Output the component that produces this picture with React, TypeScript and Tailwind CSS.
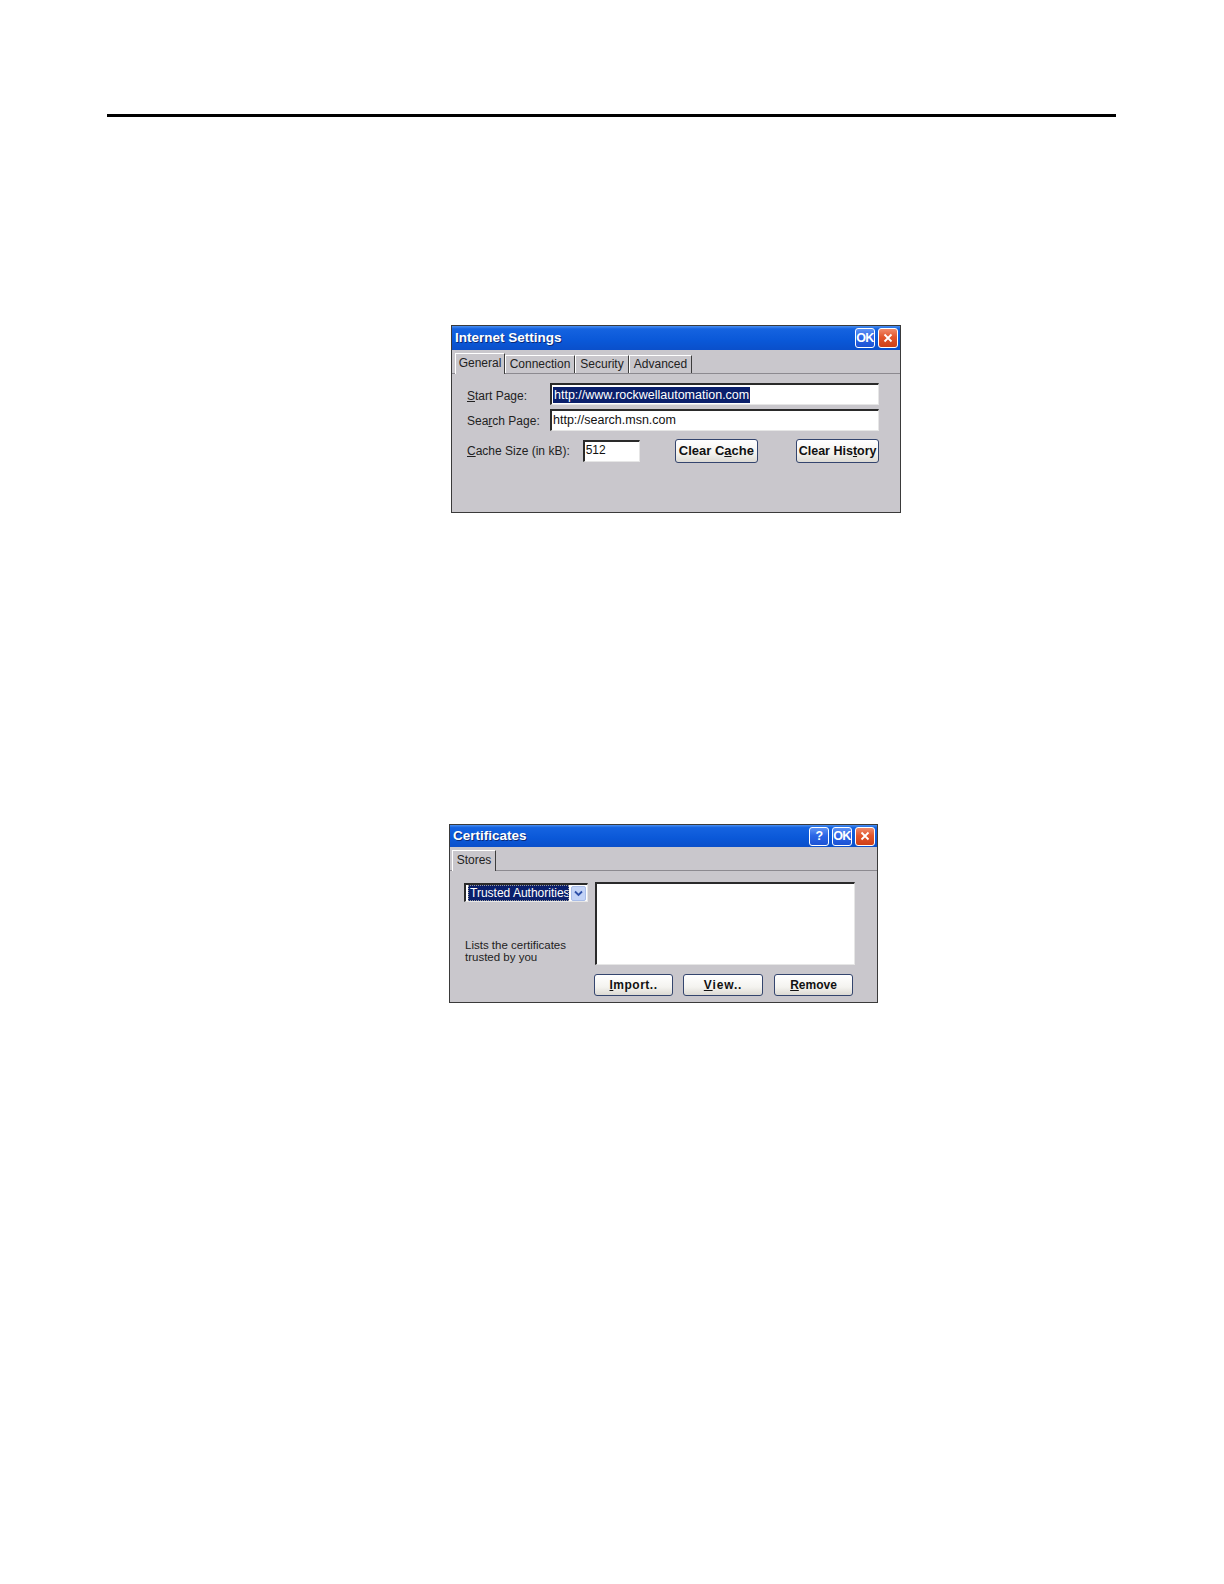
import React from "react";

function TitleBtn({ kind, h }: { kind: "ok" | "x" | "help"; h: string }) {
  if (kind === "x") {
    return (
      <div className={`w-[20px] ${h} rounded-[3px] border border-white bg-[linear-gradient(to_bottom,#f08a6a_0%,#e2562c_45%,#cf4017_100%)] flex items-center justify-center`}>
        <svg width="10" height="10" viewBox="0 0 10 10">
          <path d="M1.5 1.5 L8.5 8.5 M8.5 1.5 L1.5 8.5" stroke="white" strokeWidth="1.8" />
        </svg>
      </div>
    );
  }
  return (
    <div className={`w-[20px] ${h} rounded-[3px] border border-white bg-[linear-gradient(to_bottom,#5f93f5_0%,#2c66e6_45%,#1d53d4_100%)] flex items-center justify-center`}>
      <span className="text-white font-bold text-[12.5px] leading-none tracking-[-0.5px]">{kind === "ok" ? "OK" : "?"}</span>
    </div>
  );
}

function TitleBar({ title, help, h, bh }: { title: string; help?: boolean; h: string; bh: string }) {
  return (
    <div
      className={`${h} flex items-center justify-between pl-[3px] pr-[2px] bg-[linear-gradient(to_bottom,#4a8ff2_0%,#1563e0_12%,#0a58d8_60%,#0a4fca_100%)]`}
    >
      <span className="text-white font-bold text-[13.5px] leading-none [text-shadow:1px_1px_0_#0a2a78]">{title}</span>
      <div className="flex gap-[3px]">
        {help && <TitleBtn kind="help" h={bh} />}
        <TitleBtn kind="ok" h={bh} />
        <TitleBtn kind="x" h={bh} />
      </div>
    </div>
  );
}

function Tab({ label, w, selected }: { label: string; w: string; selected?: boolean }) {
  return (
    <div
      className={`${w} ${
        selected ? "h-[21px] -mb-px pt-[2px]" : "h-[18px] pt-[1px]"
      } border-l border-t border-l-white border-t-white border-r border-r-[#3c3c3c] bg-[#c9c7cc] text-[12px] text-[#222] text-center leading-[15px]`}
    >
      {label}
    </div>
  );
}

function Sunken({ className, children }: { className?: string; children?: React.ReactNode }) {
  return (
    <div
      className={`bg-white border-t-2 border-l-2 border-t-[#2a2a2a] border-l-[#2a2a2a] border-b border-r border-b-[#e6e6e6] border-r-[#e6e6e6] ${className ?? ""}`}
    >
      {children}
    </div>
  );
}

function XpButton({ className, children }: { className?: string; children: React.ReactNode }) {
  return (
    <div
      className={`rounded-[3px] border border-[#34456e] bg-[linear-gradient(to_bottom,#ffffff_0%,#f4f3ef_60%,#dcdad4_100%)] flex items-center justify-center font-bold text-[#111] whitespace-nowrap ${className ?? ""}`}
    >
      {children}
    </div>
  );
}

export default function App() {
  return (
    <div className="w-full h-screen bg-white font-['Liberation_Sans',Arial,sans-serif] overflow-hidden">
      <div className="pt-[114px] pl-[107px]">
        <div className="w-[1009px] h-[3px] bg-black" />
      </div>

      {/* Internet Settings dialog */}
      <div className="ml-[451px] mt-[208px] w-[450px] h-[188px] border border-[#3a3a3a] bg-[#c9c7cc] flex flex-col">
        <TitleBar title="Internet Settings" h="h-[24px]" bh="h-[20px]" />
        <div className="h-[24px] flex items-end pl-[3px] border-b border-b-[#8c8a90]">
          <Tab label="General" w="w-[50px]" selected />
          <Tab label="Connection" w="w-[70px]" />
          <Tab label="Security" w="w-[54px]" />
          <Tab label="Advanced" w="w-[63px]" />
        </div>
        <div className="flex-1 pt-[9px] pl-[15px] pr-[21px] text-[12px] text-[#222]">
          <div className="flex items-center">
            <div className="w-[83px] pt-[4px]">
              <span className="underline underline-offset-1">S</span>tart Page:
            </div>
            <Sunken className="flex-1 h-[22px] pl-[1px] flex items-center">
              <span className="bg-[#0a1f6b] text-white px-[1px] leading-[16px] text-[12.5px] whitespace-nowrap">
                http://www.rockwellautomation.com
              </span>
            </Sunken>
          </div>
          <div className="flex items-center mt-[4px]">
            <div className="w-[83px] pt-[1px]">
              Sea<span className="underline underline-offset-1">r</span>ch Page:
            </div>
            <Sunken className="flex-1 h-[22px] pl-[1px] flex items-center text-[12.5px] text-[#111]">
              http://search.msn.com
            </Sunken>
          </div>
          <div className="flex items-center mt-[8px]">
            <div className="w-[116px] whitespace-nowrap">
              <span className="underline underline-offset-1">C</span>ache Size (in kB):
            </div>
            <Sunken className="w-[57px] h-[22px] pl-[1px] text-[12px] text-[#111] leading-[16px]">512</Sunken>
            <XpButton className="ml-[35px] w-[84px] h-[24px] text-[13px]">
              Clear C<span className="underline underline-offset-1">a</span>che
            </XpButton>
            <XpButton className="ml-[38px] w-[83px] h-[24px] text-[12.5px]">
              Clear His<span className="underline underline-offset-1">t</span>ory
            </XpButton>
          </div>
        </div>
      </div>

      {/* Certificates dialog */}
      <div className="ml-[449px] mt-[311px] w-[429px] h-[179px] border border-[#3a3a3a] bg-[#c9c7cc] flex flex-col">
        <TitleBar title="Certificates" help h="h-[22px]" bh="h-[19px]" />
        <div className="h-[24px] flex items-end pl-[2px] border-b border-b-[#8c8a90]">
          <Tab label="Stores" w="w-[44px]" selected />
        </div>
        <div className="flex-1 pt-[11px] pl-[14px] pr-[22px] flex gap-[7px]">
          <div className="w-[124px] flex flex-col">
            <Sunken className="mt-[1px] h-[19px] flex items-center pl-[2px] pr-[1px]">
              <span className="bg-[#0a1f6b] text-white text-[12px] leading-[14px] px-[1px] w-[101px] whitespace-nowrap overflow-hidden border border-dotted border-[#9a9a9a]">
                Trusted Authorities
              </span>
              <div className="ml-auto w-[15px] h-[15px] bg-[#c3d3f6] border border-[#a9bde8] rounded-[2px] flex items-center justify-center">
                <svg width="9" height="7" viewBox="0 0 9 7">
                  <path d="M1 1.5 L4.5 5 L8 1.5" stroke="#2d4fa8" strokeWidth="1.8" fill="none" />
                </svg>
              </div>
            </Sunken>
            <div className="mt-[37px] pl-[1px] text-[11.5px] leading-[12px] text-[#222]">
              Lists the certificates
              <br />
              trusted by you
            </div>
          </div>
          <div className="flex-1 flex flex-col">
            <Sunken className="h-[83px]" />
            <div className="flex -ml-px mt-[9px]">
              <XpButton className="w-[79px] h-[22px] text-[12px] tracking-[0.5px] border-[#5a6275]">
                <span className="underline underline-offset-1">I</span>mport..
              </XpButton>
              <XpButton className="ml-[10px] w-[80px] h-[22px] text-[12px] tracking-[0.8px] border-[#5a6275]">
                <span className="underline underline-offset-1">V</span>iew..
              </XpButton>
              <XpButton className="ml-[11px] w-[79px] h-[22px] text-[12px] border-[#5a6275]">
                <span className="underline underline-offset-1">R</span>emove
              </XpButton>
            </div>
          </div>
        </div>
      </div>
    </div>
  );
}
